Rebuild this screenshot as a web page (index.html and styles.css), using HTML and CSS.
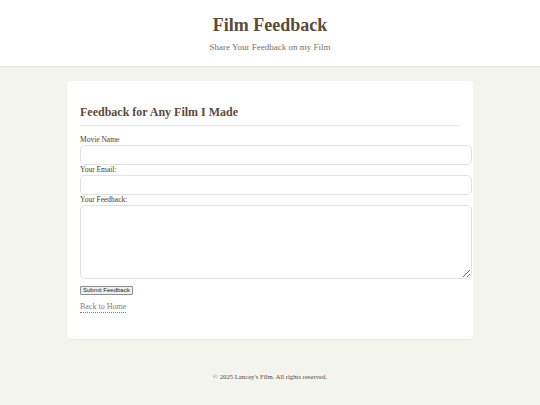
FILE: index.html
```html
<!DOCTYPE html>
<html lang="en">
<head>
    <meta charset="UTF-8">
    <meta name="viewport" content="width=device-width, initial-scale=1.0">
    <title>Film Feedback</title>
    <link rel="stylesheet" href="styles.css">
</head>
<body>
    <header class="site_header">
        <h1>Film Feedback</h1>
        <p class="tagline">Share Your Feedback on my Film</p>
    </header>

    <main class="page">
        <section class="card">
            <h2>Feedback for Any Film I Made</h2>
            <form class="feedback_form">
                <label for="movieName">Movie Name</label>
                <input type="text" id="movieName" name="movie">
                <label for="email">Your Email:</label>
                <input type="email" id="email" name="email">
                <label for="feedback">Your Feedback:</label>
                <textarea id="feedback" name="feedback"></textarea>
                <div class="submit_row">
                    <input class="button" type="submit" value="Submit Feedback">
                </div>
            </form>
            <div class="back_row">
                <a class="back_link" href="#">Back to Home</a>
            </div>
        </section>
    </main>

    <footer class="site_footer">
        <p>&copy; 2025 Lancey's Film. All rights reserved.</p>
    </footer>
</body>
</html>
```

FILE: styles.css
```css
body {
    margin: 0;
    background-color: #f4f4ef;
    font-family: Georgia, "Liberation Serif", serif;
    color: #5b4a3a;
    }
.site_header {
    background-color: #ffffff;
    border-bottom: 1px solid #e4e4df;
    text-align: center;
    padding: 14px 0 13px;
    }
.site_header h1 {
    margin: 0;
    font-size: 18px;
    line-height: 22px;
    }
.tagline {
    margin: 6px 0 0;
    font-size: 9px;
    line-height: 11px;
    color: #7d6e60;
    }
.page {
    padding: 14px 0 0;
    }
.card {
    width: 380px;
    margin: 0 auto;
    padding: 13px 13px 26px;
    background-color: #ffffff;
    border-radius: 4px;
    box-shadow: 0 1px 2px rgba(0, 0, 0, 0.06);
    }
.card h2 {
    margin: 11px 0 0;
    padding-bottom: 6px;
    font-size: 12px;
    line-height: 14px;
    border-bottom: 1px solid #e6e6e6;
    }
.feedback_form {
    display: flex;
    flex-direction: column;
    margin-top: 9px;
    }
.feedback_form label {
    font-size: 7.5px;
    line-height: 10px;
    color: #4a3e33;
    }
.feedback_form input[type=text],
.feedback_form input[type=email],
.feedback_form textarea {
    display: block;
    width: 100%;
    height: 10px;
    padding: 4px 5px;
    margin: 0;
    border: 1px solid #e2e2e2;
    border-radius: 5px;
    box-sizing: content-box;
    font-size: 7px;
    }
.feedback_form textarea {
    height: 64px;
    resize: vertical;
    }
.submit_row {
    display: flex;
    margin-top: 7px;
    }
.button {
    font-family: "Liberation Sans", Arial, sans-serif;
    font-size: 6px;
    line-height: 7px;
    height: 7px;
    padding: 0 2px;
    color: #222222;
    background-color: #efefef;
    border: 1px solid #8f8f8f;
    border-radius: 1px;
    box-sizing: content-box;
    }
.back_row {
    display: flex;
    margin-top: 7px;
    }
.back_link {
    display: block;
    font-size: 8px;
    line-height: 10px;
    color: #8a7a6b;
    text-decoration: none;
    border-bottom: 1px dotted #8a7a6b;
    }
.site_footer {
    text-align: center;
    padding: 33px 0;
    }
.site_footer p {
    margin: 0;
    font-size: 6.7px;
    line-height: 9px;
    color: #5b4a3a;
    }
```
